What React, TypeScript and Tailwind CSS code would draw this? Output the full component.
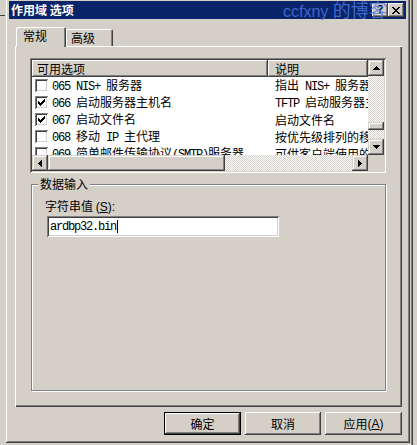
import React from "react";

const RAISED =
  "shadow-[inset_-1px_-1px_#404040,inset_1px_1px_#d4d0c8,inset_-2px_-2px_#808080,inset_2px_2px_#ffffff]";
const BUTTON =
  "shadow-[inset_-1px_-1px_#404040,inset_1px_1px_#ffffff,inset_-2px_-2px_#808080,inset_2px_2px_#d4d0c8]";
const SUNKEN =
  "shadow-[inset_1px_1px_#808080,inset_-1px_-1px_#ffffff,inset_2px_2px_#404040,inset_-2px_-2px_#d4d0c8]";
const HEADER =
  "shadow-[inset_-1px_-1px_#404040,inset_1px_1px_#ffffff,inset_-2px_-2px_#808080]";
const DITHER =
  "bg-[image:repeating-conic-gradient(#ffffff_0%_25%,#d4d0c8_0%_50%)] bg-[length:2px_2px]";

function Txt({ s }: { s: string }) {
  const parts = s.split(/([\x20-\x7e]+)/).filter(Boolean);
  return (
    <>
      {parts.map((p, i) =>
        /^[\x20-\x7e]+$/.test(p) ? (
          <span key={i} className="font-['Liberation_Mono',monospace] tracking-[-1.2px]">
            {p}
          </span>
        ) : (
          <span key={i}>{p}</span>
        )
      )}
    </>
  );
}

function Arrow({ dir }: { dir: "up" | "down" | "left" | "right" }) {
  const rows = [
    [3, 1],
    [2, 3],
    [1, 5],
    [0, 7],
  ];
  if (dir === "up" || dir === "down") {
    return (
      <svg width="7" height="4" viewBox="0 0 7 4" shapeRendering="crispEdges">
        {rows.map(([x, w], i) => (
          <rect key={i} x={x} y={dir === "up" ? i : 3 - i} width={w} height={1} fill="#000" />
        ))}
      </svg>
    );
  }
  return (
    <svg width="4" height="7" viewBox="0 0 4 7" shapeRendering="crispEdges">
      {rows.map(([y, h], i) => (
        <rect key={i} y={y} x={dir === "left" ? i : 3 - i} height={h} width={1} fill="#000" />
      ))}
    </svg>
  );
}

function ScrollBtn({ dir }: { dir: "up" | "down" | "left" | "right" }) {
  return (
    <div className={`w-[16px] h-[16px] shrink-0 bg-[#d4d0c8] flex items-center justify-center ${RAISED}`}>
      <Arrow dir={dir} />
    </div>
  );
}

function Check({ on }: { on: boolean }) {
  return (
    <div className={`w-[13px] h-[13px] shrink-0 bg-white ${SUNKEN} flex items-center justify-center`}>
      {on && (
        <svg width="7" height="7" viewBox="0 0 7 7" shapeRendering="crispEdges">
          <path d="M0 2h1v3h-1z M1 3h1v3h-1z M2 4h1v3h-1z M3 3h1v3h-1z M4 2h1v3h-1z M5 1h1v3h-1z M6 0h1v3h-1z" fill="#000" />
        </svg>
      )}
    </div>
  );
}

const rows = [
  { on: false, a: "065 NIS+ 服务器", b: "指出 NIS+ 服务器" },
  { on: true, a: "066 启动服务器主机名", b: "TFTP 启动服务器主机名" },
  { on: true, a: "067 启动文件名", b: "启动文件名" },
  { on: false, a: "068 移动 IP 主代理", b: "按优先级排列的移动" },
  { on: false, a: "069 简单邮件传输协议(SMTP)服务器", b: "可供客户端使用的" },
];

export default function App() {
  return (
    <div className="relative w-[417px] h-[445px] overflow-hidden bg-[#d4d0c8] text-[12px] leading-[14px] text-black font-['Noto_Sans_CJK_SC','Noto_Sans',sans-serif]">
      {/* background window fragments */}
      <div className="absolute left-0 top-[15px] w-[5px] h-[1px] bg-[#404040]" />
      <div className="absolute left-[412px] top-0 w-[1px] h-[445px] bg-[#404040]" />
      <div className="absolute left-[411px] top-0 w-[1px] h-[445px] bg-[#808080]" />

      {/* dialog window */}
      <div className="absolute left-[5px] top-[-3px] w-[405px] h-[446px] bg-[#d4d0c8] p-[4px] shadow-[inset_1px_1px_#d4d0c8,inset_-1px_-1px_#404040,inset_2px_2px_#ffffff,inset_-2px_-2px_#808080]">
        <div className="flex flex-col h-full">
          {/* title bar */}
          <div className="relative h-[18px] shrink-0 bg-[#0a246a] flex items-center pl-[2px] pr-[2px]">
            <span className="text-white font-bold text-[12px] leading-[14px]">作用域 选项</span>
            <div className="ml-auto flex">
              <div className={`w-[16px] h-[14px] bg-[#d4d0c8] ${BUTTON} flex items-center justify-center`}>
                <span className="font-['Liberation_Sans',sans-serif] font-bold text-[11px] leading-[11px] -mt-[1px]">?</span>
              </div>
              <div className={`w-[16px] h-[14px] bg-[#d4d0c8] ${BUTTON} flex items-center justify-center`}>
                <svg width="8" height="7" viewBox="0 0 8 7" shapeRendering="crispEdges">
                  <path d="M0 0h2v1h-2z M6 0h2v1h-2z M1 1h2v1h-2z M5 1h2v1h-2z M2 2h4v1h-4z M3 3h2v1h-2z M2 4h4v1h-4z M1 5h2v1h-2z M5 5h2v1h-2z M0 6h2v1h-2z M6 6h2v1h-2z" fill="#000" />
                </svg>
              </div>
            </div>
            {/* watermark */}
            <div className="absolute z-20 left-[274px] top-[-2px] whitespace-nowrap text-[rgba(80,120,230,0.8)] leading-[20px] pointer-events-none">
              <span className="font-['Liberation_Sans',sans-serif] text-[16px]">ccfxny </span>
              <span className="text-[18px]">的博客</span>
            </div>
          </div>

          {/* tabs */}
          <div className="mt-[8px] ml-[7px] h-[19px] flex items-end shrink-0">
            <div className="relative z-10 w-[50px] h-[20px] -mb-[1px] bg-[#d4d0c8] rounded-tl-[2px] rounded-tr-[2px] shadow-[inset_1px_1px_#ffffff,inset_-1px_0_#404040,inset_-2px_0_#808080] pl-[7px] pt-[2px]">
              常规
            </div>
            <div className="w-[47px] h-[17px] bg-[#d4d0c8] rounded-tr-[2px] shadow-[inset_1px_1px_#ffffff,inset_-1px_0_#404040,inset_-2px_0_#808080] pl-[5px] pt-[2px]">
              高级
            </div>
          </div>

          {/* panel */}
          <div className="ml-[6px] w-[387px] h-[361px] shrink-0 bg-[#d4d0c8] shadow-[inset_1px_1px_#ffffff,inset_-1px_-1px_#404040,inset_-2px_-2px_#808080] flex flex-col">
            {/* list */}
            <div className={`ml-[15px] mt-[12px] w-[356px] h-[115px] bg-white p-[2px] ${SUNKEN}`}>
              <div className="flex h-full">
                <div className="flex-1 min-w-0 flex flex-col">
                  <div className="h-[17px] flex shrink-0">
                    <div className={`w-[236px] shrink-0 bg-[#d4d0c8] ${HEADER} pl-[5px] pt-[2px]`}>可用选项</div>
                    <div className={`flex-1 bg-[#d4d0c8] ${HEADER} pl-[7px] pt-[2px]`}>说明</div>
                  </div>
                  <div className="flex-1 overflow-hidden">
                    {rows.map((r, i) => (
                      <div key={i} className="h-[17px] flex items-center whitespace-nowrap">
                        <div className="w-[236px] shrink-0 overflow-hidden flex items-center pl-[3px]">
                          <Check on={r.on} />
                          <span className="ml-[4px]">
                            <Txt s={r.a} />
                          </span>
                        </div>
                        <div className="flex-1 min-w-0 overflow-hidden pl-[7px]">
                          <Txt s={r.b} />
                        </div>
                      </div>
                    ))}
                  </div>
                  <div className="h-[16px] flex shrink-0">
                    <ScrollBtn dir="left" />
                    <div className={`w-[177px] shrink-0 bg-[#d4d0c8] ${RAISED}`} />
                    <div className={`flex-1 ${DITHER}`} />
                    <ScrollBtn dir="right" />
                  </div>
                </div>
                <div className="w-[16px] flex flex-col shrink-0">
                  <ScrollBtn dir="up" />
                  <div className={`h-[46px] ${DITHER}`} />
                  <div className={`h-[8px] bg-[#d4d0c8] ${RAISED}`} />
                  <div className={`h-[9px] ${DITHER}`} />
                  <ScrollBtn dir="down" />
                  <div className="h-[16px] bg-[#d4d0c8]" />
                </div>
              </div>
            </div>

            {/* group box */}
            <div className="ml-[16px] mt-[11px] w-[355px] h-[207px] border border-[#808080] shadow-[inset_1px_1px_#ffffff,1px_1px_#ffffff] flex flex-col">
              <div className="-mt-[8px] ml-[6px] px-[2px] w-fit h-[14px] bg-[#d4d0c8]">数据输入</div>
              <div className="mt-[8px] ml-[13px] h-[14px]">
                字符串值 <span className="font-['Liberation_Sans',sans-serif]">(<u>S</u>):</span>
              </div>
              <div className={`mt-[3px] ml-[15px] w-[232px] h-[21px] bg-white ${SUNKEN} flex items-center pl-[3px]`}>
                <span className="font-['Liberation_Mono',monospace] tracking-[-1.2px]">ardbp32.bin</span>
                <span className="ml-[1px] w-[1px] h-[13px] bg-black" />
              </div>
            </div>
          </div>

          {/* buttons */}
          <div className="mt-[5px] flex justify-end pr-[4px] shrink-0">
            <div className="w-[77px] h-[23px] border border-black">
              <div className={`w-full h-full ${BUTTON} flex items-center justify-center`}>确定</div>
            </div>
            <div className={`ml-[4px] w-[76px] h-[23px] ${BUTTON} flex items-center justify-center`}>取消</div>
            <div className={`ml-[4px] w-[77px] h-[23px] ${BUTTON} flex items-center justify-center`}>
              应用<span className="font-['Liberation_Sans',sans-serif]">(<u>A</u>)</span>
            </div>
          </div>
        </div>
      </div>
    </div>
  );
}
